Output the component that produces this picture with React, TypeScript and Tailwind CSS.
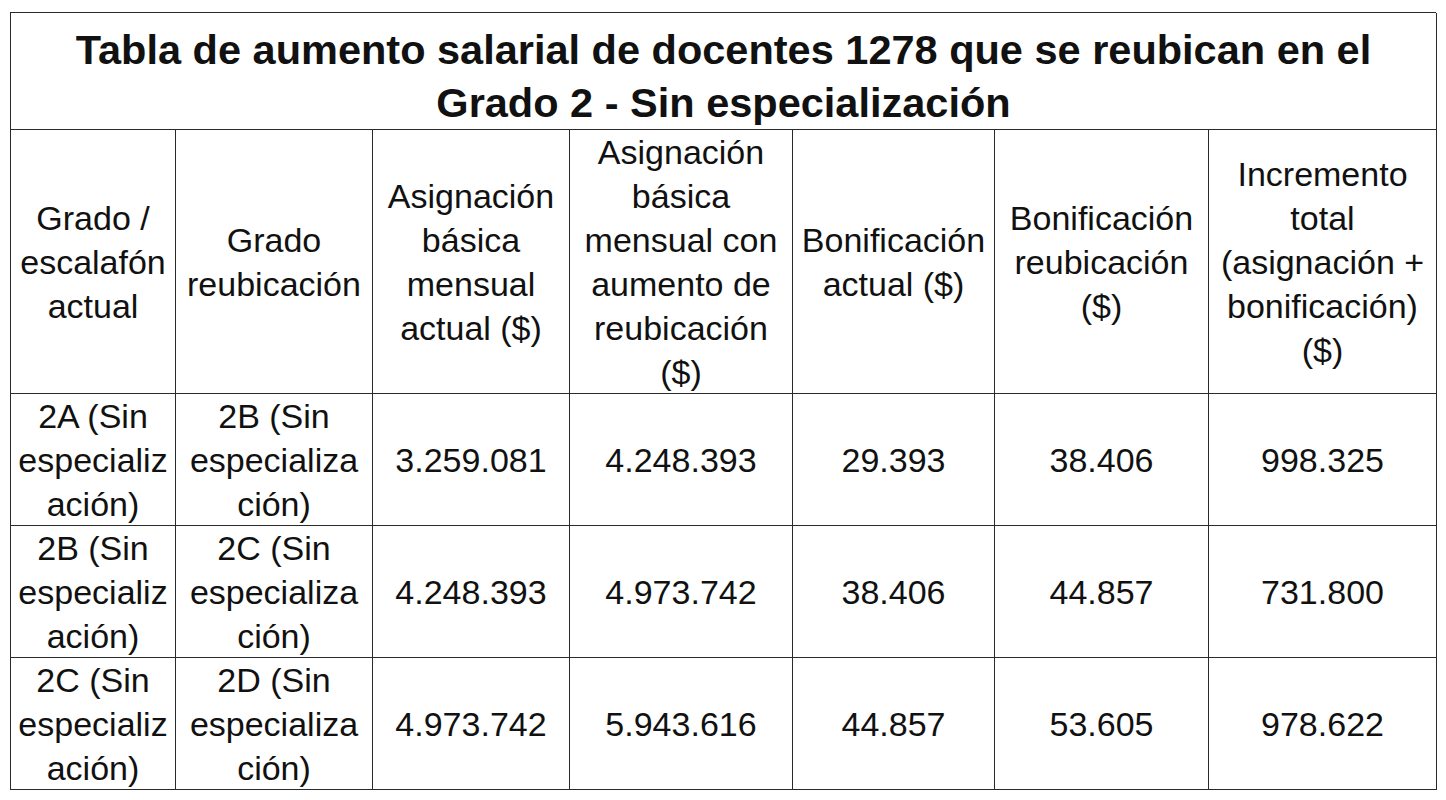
const headers: string[][] = [
  ['Grado /', 'escalafón', 'actual'],
  ['Grado', 'reubicación'],
  ['Asignación', 'básica', 'mensual', 'actual ($)'],
  ['Asignación', 'básica', 'mensual con', 'aumento de', 'reubicación', '($)'],
  ['Bonificación', 'actual ($)'],
  ['Bonificación', 'reubicación', '($)'],
  ['Incremento', 'total', '(asignación +', 'bonificación)', '($)'],
];

const rows: string[][][] = [
  [
    ['2A (Sin', 'especializ', 'ación)'],
    ['2B (Sin', 'especializa', 'ción)'],
    ['3.259.081'],
    ['4.248.393'],
    ['29.393'],
    ['38.406'],
    ['998.325'],
  ],
  [
    ['2B (Sin', 'especializ', 'ación)'],
    ['2C (Sin', 'especializa', 'ción)'],
    ['4.248.393'],
    ['4.973.742'],
    ['38.406'],
    ['44.857'],
    ['731.800'],
  ],
  [
    ['2C (Sin', 'especializ', 'ación)'],
    ['2D (Sin', 'especializa', 'ción)'],
    ['4.973.742'],
    ['5.943.616'],
    ['44.857'],
    ['53.605'],
    ['978.622'],
  ],
];

function Lines({ lines }: { lines: string[] }) {
  return (
    <>
      {lines.map((l, i) => (
        <span key={i} className="block whitespace-nowrap">
          {l}
        </span>
      ))}
    </>
  );
}

export default function App() {
  return (
    <div className="min-h-[800px] bg-white pl-[10px] pt-[12px] font-['Liberation_Sans',Arial,sans-serif] text-[#111]">
      <div className="grid w-[1426px] grid-cols-[165px_197px_197px_223px_202px_214px_228px] border-l-[1.5px] border-t-[1.5px] border-[#2a2a2a]">
        {/* Title */}
        <div className="col-span-7 h-[117px] border-b-[1.5px] border-r-[1.5px] border-[#2a2a2a] pt-[10px] text-center text-[41.5px] font-bold leading-[53px]">
          <span className="block whitespace-nowrap">
            Tabla de aumento salarial de docentes 1278 que se reubican en el
          </span>
          <span className="block whitespace-nowrap">Grado 2 - Sin especialización</span>
        </div>

        {/* Header row */}
        {headers.map((h, i) => (
          <div
            key={i}
            className="flex h-[264px] flex-col items-center justify-center border-b-[1.5px] border-r-[1.5px] border-[#2a2a2a] text-center text-[34px] leading-[44px]"
          >
            <Lines lines={h} />
          </div>
        ))}

        {/* Data rows */}
        {rows.map((row, r) =>
          row.map((cell, c) => (
            <div
              key={`${r}-${c}`}
              className="flex h-[132px] flex-col items-center justify-center border-b-[1.5px] border-r-[1.5px] border-[#2a2a2a] text-center text-[34px] leading-[44px]"
            >
              <Lines lines={cell} />
            </div>
          ))
        )}
      </div>
    </div>
  );
}
